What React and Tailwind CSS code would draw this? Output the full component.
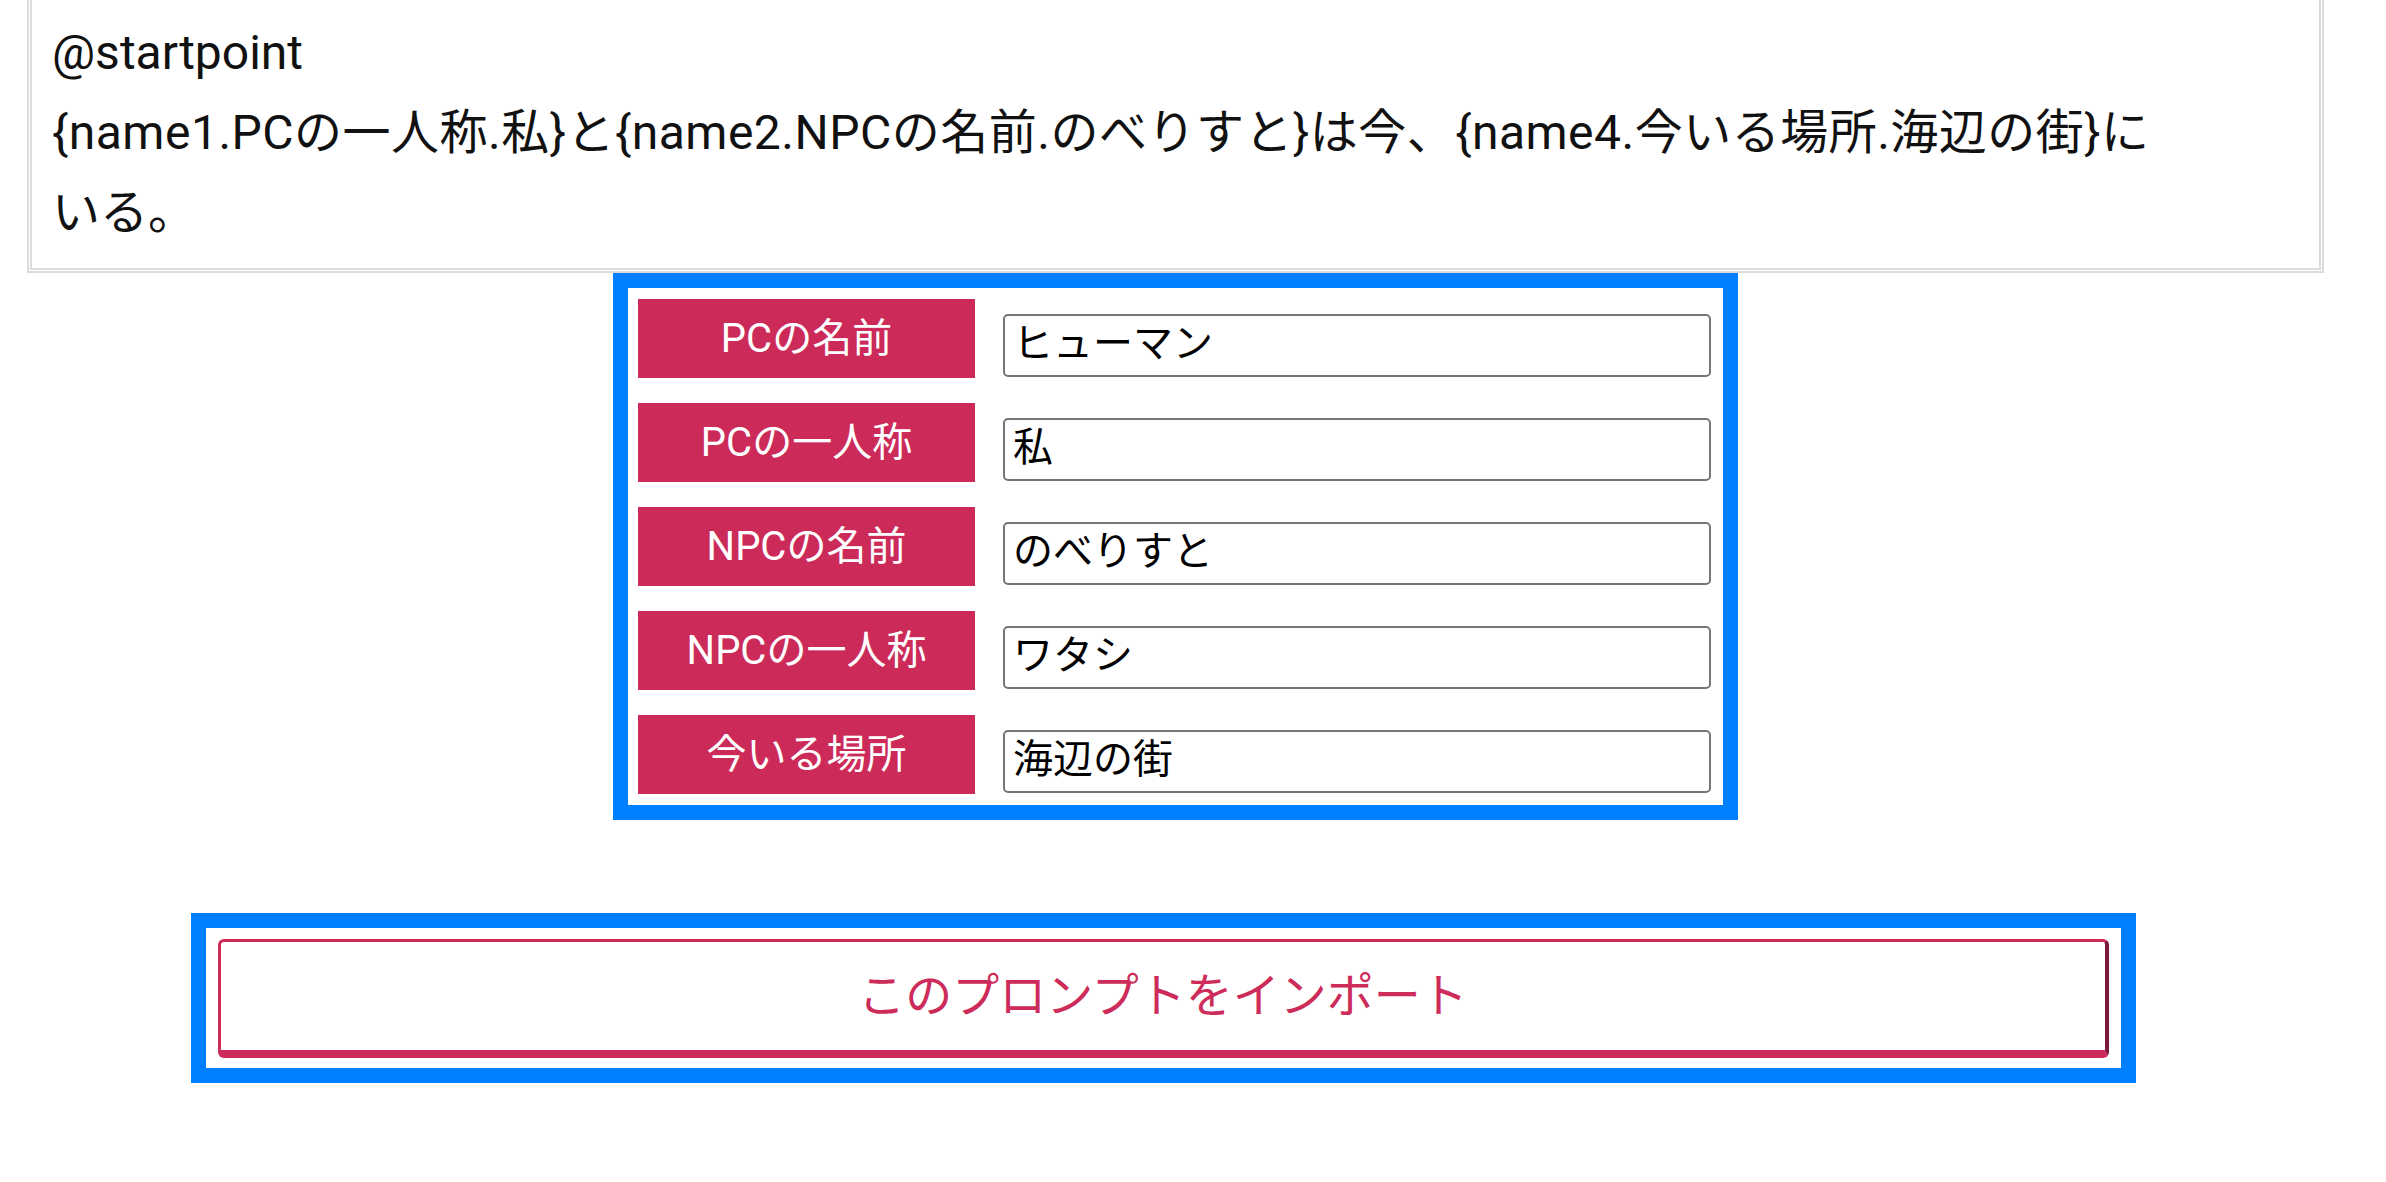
import React from 'react';

const fields = [
  { label: 'PCの名前', value: 'ヒューマン' },
  { label: 'PCの一人称', value: '私' },
  { label: 'NPCの名前', value: 'のべりすと' },
  { label: 'NPCの一人称', value: 'ワタシ' },
  { label: '今いる場所', value: '海辺の街' },
];

const font = { fontFamily: 'Roboto, "Noto Sans CJK JP", sans-serif' };

const FieldRow = ({ label, value }) => (
  <div className="flex items-end">
    <div className="w-[337px] h-[79px] shrink-0 bg-[#cc2b5a] text-white flex items-center justify-center text-[40px] font-normal">
      {label}
    </div>
    <input
      className="ml-[28px] mb-[1px] w-[708px] h-[63px] border-2 border-[#767676] rounded-[5px] px-[8px] pb-[11px] text-[40px] text-black outline-none"
      defaultValue={value}
      style={{ fontFamily: '"Noto Sans CJK JP", sans-serif' }}
    />
  </div>
);

export default function App() {
  return (
    <div className="min-h-screen bg-white" style={font}>
      {/* プロンプト本文 */}
      <div className="ml-[27px] w-[2297px] border-[5px] border-t-0 border-double border-[#dedada] pl-[20px] pr-[20px] pt-[13px] pb-[15px] text-[48px] leading-[80px] text-[#111]">
        @startpoint
        <br />
        <span className="tracking-[0.5px]">
          {'{name1.PCの一人称.私}と{name2.NPCの名前.のべりすと}は今、{name4.今いる場所.海辺の街}に'}
        </span>
        <br />
        いる。
      </div>

      {/* 入力フォーム */}
      <div className="ml-[613px] w-[1125px] border-[15px] border-[#0080ff] pl-[10px] pr-[11px] pt-[11px] pb-[11px] flex flex-col gap-[25px]">
        {fields.map((f) => (
          <FieldRow key={f.label} label={f.label} value={f.value} />
        ))}
      </div>

      {/* インポートボタン */}
      <div className="mt-[93px] ml-[191px] w-[1945px] border-[15px] border-[#0080ff] px-[12px] pt-[11px] pb-[10px]">
        <button className="w-full h-[119px] bg-white border-[3px] border-b-[8px] border-r-[4px] border-[#cd2b5a] border-r-[#7a1a3a] rounded-[6px] text-[47px] text-[#cd2b5a] flex items-center justify-center">
          このプロンプトをインポート
        </button>
      </div>
    </div>
  );
}
